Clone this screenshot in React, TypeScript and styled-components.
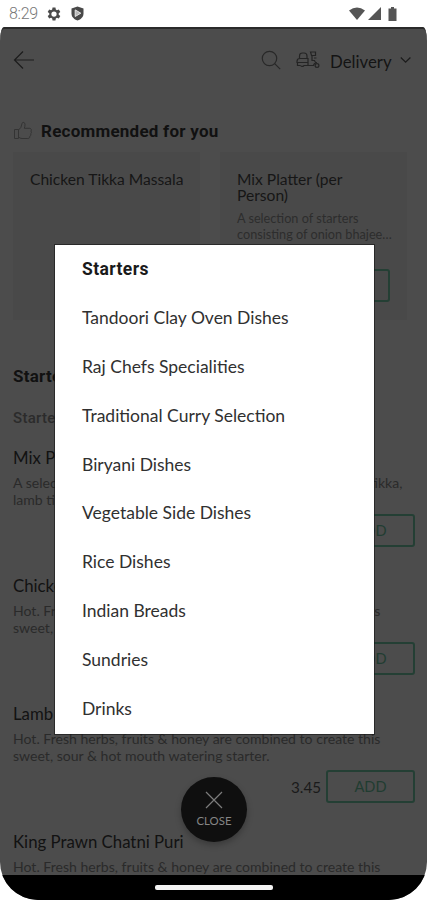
import React from 'react';
import styled, { createGlobalStyle } from 'styled-components';

const Global = createGlobalStyle`
  * { box-sizing: border-box; }
  body { margin: 0; background: #fff; font-family: Lato, sans-serif; }
  h2, h3, h4, p, ul { margin: 0; padding: 0; }
  button { font-family: inherit; padding: 0; }
`;

const Phone = styled.div`
  position: relative;
  width: 427px;
  height: 900px;
  overflow: hidden;
  background: #fff;
  display: flex;
  flex-direction: column;
`;

const StatusBar = styled.div`
  height: 27px;
  flex: none;
  display: flex;
  align-items: center;
  justify-content: space-between;
  padding: 0 29px 0 9px;
`;

const StatusGroup = styled.div<{ $gap: number }>`
  display: flex;
  align-items: center;
  gap: ${(p) => p.$gap}px;
`;

const Clock = styled.span`
  width: 28px;
  font: 300 16px/20px Roboto, sans-serif;
  letter-spacing: -0.3px;
  color: #777;
`;

const Screen = styled.div`
  flex: 1;
  min-height: 0;
  display: flex;
  flex-direction: column;
  overflow: hidden;
  background: #4c4c4c;
  border-top: 2px solid #2a2a2a;
  border-radius: 4px 4px 38px 38px / 14px 14px 38px 38px;
`;

const Header = styled.header`
  height: 62px;
  flex: none;
  display: flex;
  align-items: center;
  justify-content: space-between;
  padding: 0 15px 0 13px;
`;

const HeaderActions = styled.div`
  display: flex;
  align-items: center;
`;

const Mode = styled.span`
  width: 62px;
  margin: 3px 8px 0 10px;
  font-size: 16.8px;
  line-height: 22px;
  color: #141414;
`;

const Scooter = styled.svg`
  margin-left: 15px;
`;

const Content = styled.main`
  flex: 1;
  min-height: 0;
  overflow: hidden;
  padding: 27px 12px 0 13px;
`;

const SectionTitle = styled.h2`
  display: flex;
  align-items: center;
  gap: 7px;
  height: 26px;
  font: 700 17px/22px Roboto, sans-serif;
  letter-spacing: 0.24px;
  color: #111;
`;

const Cards = styled.div`
  display: flex;
  gap: 20px;
  margin-top: 8px;
`;

const Card = styled.article`
  width: 187px;
  height: 168px;
  background: #494949;
  padding: 20px 17px 0;
  display: flex;
  flex-direction: column;
`;

const CardTitle = styled.h3`
  font-size: 15.6px;
  line-height: 15.6px;
  font-weight: 400;
  color: #161616;
  white-space: pre;
`;

const CardText = styled.p`
  margin-top: 7px;
  font-size: 12.7px;
  line-height: 16px;
  color: #2d2d2d;
  white-space: pre;
`;

const CardFooter = styled.div<{ $gap: number }>`
  margin-top: auto;
  margin-bottom: 18px;
  display: flex;
  align-items: center;
  justify-content: flex-end;
  gap: ${(p) => p.$gap}px;
`;

const MenuHeading = styled.h2`
  margin-top: 45px;
  font: 700 17px/22px Roboto, sans-serif;
  letter-spacing: 0.24px;
  color: #111;
`;

const SubHeading = styled.h3`
  margin-top: 20px;
  font: 500 15px/22px Roboto, sans-serif;
  letter-spacing: 0.3px;
  color: #2b2b2b;
`;

const Dish = styled.article`
  height: 128px;
`;

const Dishes = styled.section`
  padding-top: 18px;
`;

const DishName = styled.h4`
  font-size: 16.8px;
  line-height: 22px;
  font-weight: 400;
  color: #121212;
`;

const DishText = styled.p`
  margin-top: 5px;
  height: 36px;
  font-size: 14.07px;
  line-height: 17.4px;
  color: #2a2a2a;
  white-space: pre;
`;

const DishFooter = styled.div`
  display: flex;
  align-items: center;
  justify-content: flex-end;
  gap: 5px;
  margin-top: 4px;
`;

const Price = styled.span`
  font-size: 15.2px;
  line-height: 20px;
  color: #1a1a1a;
`;

const AddButton = styled.button`
  width: 89px;
  height: 33px;
  border: 2px solid #243f34;
  border-radius: 3px;
  background: transparent;
  font-size: 14.6px;
  color: #213c31;
`;

const NavBar = styled.div`
  height: 25px;
  flex: none;
  background: #000;
  display: flex;
  justify-content: center;
  align-items: center;
`;

const NavHandle = styled.div`
  width: 118px;
  height: 5px;
  border-radius: 2px;
  background: #f4f4f4;
`;

const Modal = styled.div`
  position: absolute;
  left: 55px;
  top: 245px;
  width: 319px;
  height: 489px;
  background: #fff;
  box-shadow: 0 0 0 1px rgba(20, 20, 20, 0.6);
`;

const MenuList = styled.ul`
  list-style: none;
`;

const MenuItem = styled.li<{ $active?: boolean }>`
  height: 48.8px;
  display: flex;
  align-items: center;
  padding-left: 27px;
  padding-bottom: ${(p) => (p.$active ? 0 : 1)}px;
  font-family: ${(p) => (p.$active ? 'Roboto' : 'Lato')}, sans-serif;
  font-size: 17.5px;
  letter-spacing: ${(p) => (p.$active ? '0.4px' : 'normal')};
  font-weight: ${(p) => (p.$active ? 700 : 400)};
  color: ${(p) => (p.$active ? '#1a1a1a' : '#303030')};
`;

const CloseButton = styled.button`
  position: absolute;
  left: 181px;
  top: 777px;
  width: 66px;
  height: 65px;
  border: 0;
  border-radius: 50%;
  background: #0f0f0f;
  box-shadow: 0 3px 6px rgba(0, 0, 0, 0.25);
  display: flex;
  flex-direction: column;
  align-items: center;
  padding-top: 14px;
  gap: 5px;
  font-size: 11.4px;
  line-height: 14px;
  color: #858585;
`;

const LINES = 'Hot. Fresh herbs, fruits & honey are combined to create this\nsweet, sour & hot mouth watering starter.';

const dishes = [
  { name: 'Mix Platter (per Person)', text: 'A selection of starters consisting of onion bhajee, chicken tikka,\nlamb tikka and sheek kebab.', price: '4.95' },
  { name: 'Chicken Chatni Puri', text: LINES, price: '3.45' },
  { name: 'Lamb Chatni Puri', text: LINES, price: '3.45' },
  { name: 'King Prawn Chatni Puri', text: LINES, price: '4.45' },
];

const categories = [
  'Starters',
  'Tandoori Clay Oven Dishes',
  'Raj Chefs Specialities',
  'Traditional Curry Selection',
  'Biryani Dishes',
  'Vegetable Side Dishes',
  'Rice Dishes',
  'Indian Breads',
  'Sundries',
  'Drinks',
];

const Gear = () => (
  <svg width="14" height="14" viewBox="0 0 24 24" fill="#4a4a4a">
    <path fillRule="evenodd" d="M9.5 1h5l.6 3.4 1.9 1.1 3.3-1.2 2.5 4.3-2.7 2.3v2.2l2.7 2.3-2.5 4.3-3.3-1.2-1.9 1.1-.6 3.4h-5l-.6-3.4L7 18.500l-3.300 1.200-2.500-4.300 2.700-2.300v-2.200L1.200 8.600l2.500-4.300L7 5.500l1.900-1.100zM12 7.500a4.500 4.500 0 1 0 0 9 4.500 4.500 0 0 0 0-9z" />
  </svg>
);

const Shield = () => (
  <svg width="13" height="15" viewBox="0 0 13 15">
    <path d="M6.500 .5 12.500 2.500v5c0 3.500-2.500 5.800-6 7-3.500-1.200-6-3.500-6-7v-5z" fill="#494949" />
    <path d="M4.200 3.900 9.800 7.200 4.200 10.500z" fill="#b9b9b9" stroke="#e4e4e4" strokeWidth="1" />
  </svg>
);

export default function App() {
  return (
    <>
      <Global />
      <Phone>
        <StatusBar>
          <StatusGroup $gap={10}>
            <Clock>8:29</Clock>
            <Gear />
            <Shield />
          </StatusGroup>
          <StatusGroup $gap={3}>
            <svg width="16" height="13" viewBox="0 0 16 13"><path d="M0 3.500Q8-2.500 16 3.500L8 13z" fill="#555" /></svg>
            <svg width="13" height="13" viewBox="0 0 13 13"><path d="M13 0v13H0z" fill="#555" /></svg>
            <svg width="14" height="14" viewBox="0 0 14 14"><path d="M5 1.500h2V0h3v1.500h2.500V14H4.500V1.500z" fill="#555" /></svg>
          </StatusGroup>
        </StatusBar>
        <Screen>
          <Header>
            <svg width="22" height="20" viewBox="0 0 22 20" fill="none" stroke="#1c1c1c" strokeWidth="1.200">
              <path d="M10 1.500 1.500 10l8.500 8.500M1.500 10H21" />
            </svg>
            <HeaderActions>
              <svg width="20" height="20" viewBox="0 0 20 20" fill="none" stroke="#282828" strokeWidth="1.200">
                <circle cx="8.500" cy="8.500" r="7.200" />
                <path d="m13.700 13.700 5.500 5.500" />
              </svg>
              <Scooter width="24" height="20" viewBox="0 0 24 20" fill="none" stroke="#242424" strokeWidth="1.200">
                <path d="M3.500 8V6q0-3 3-3h1.500q3 0 3 3v2M1 11.500q0-3 3-3h8v4H1zM1.500 12.500v3h3M8 15.500h6M12 8.500v7" />
                <path d="M4.500 15.500q1.500 2 3.500 0" />
                <path d="M14.500 2h5v3.500h-4zM16 5.500v5h2.500l1.500 3M14 15.500h3.500q.5-3 3.500-3M18 8h2.500" />
                <circle cx="21" cy="15.500" r="1.900" />
              </Scooter>
              <Mode>Delivery</Mode>
              <svg width="12" height="8" viewBox="0 0 12 8" fill="none" stroke="#1c1c1c" strokeWidth="1.300"><path d="m.8 1.500 4.800 4.700 4.800-4.700" /></svg>
            </HeaderActions>
          </Header>
          <Content>
            <SectionTitle>
              <svg width="21" height="20" viewBox="0 0 21 20" fill="none" stroke="#343434" strokeWidth="1">
                <path d="M1.500 8.500h4v9h-4zM5.500 9q3-2 3.500-6.500c.2-1.600 3-1.500 3 .8 0 1.500-.3 2.600-.7 4h5c2.200 0 2.500 1.800 1.500 2.800 1 .7.8 2.200-.2 2.700.6 1 .1 2-.8 2.400.3 1.200-.4 2.300-2 2.300H9q-2 0-3.500-1.500" />
              </svg>
              Recommended for you
            </SectionTitle>
            <Cards>
              <Card>
                <CardTitle>Chicken Tikka Massala</CardTitle>
                <CardFooter $gap={9}><Price>9.95</Price><AddButton>ADD</AddButton></CardFooter>
              </Card>
              <Card>
                <CardTitle>{'Mix Platter (per\nPerson)'}</CardTitle>
                <CardText>{'A selection of starters\nconsisting of onion bhajee…'}</CardText>
                <CardFooter $gap={5}><Price>4.95</Price><AddButton>ADD</AddButton></CardFooter>
              </Card>
            </Cards>
            <MenuHeading>Starters</MenuHeading>
            <SubHeading>Starters</SubHeading>
            <Dishes>
              {dishes.map((d) => (
                <Dish key={d.name}>
                  <DishName>{d.name}</DishName>
                  <DishText>{d.text}</DishText>
                  <DishFooter><Price>{d.price}</Price><AddButton>ADD</AddButton></DishFooter>
                </Dish>
              ))}
            </Dishes>
          </Content>
          <NavBar><NavHandle /></NavBar>
        </Screen>
        <Modal>
          <MenuList>
            {categories.map((c, i) => <MenuItem key={c} $active={i === 0}>{c}</MenuItem>)}
          </MenuList>
        </Modal>
        <CloseButton>
          <svg width="18" height="18" viewBox="0 0 18 18" stroke="#7c7c7c" strokeWidth="1.200"><path d="m1 1 16 16M17 1 1 17" /></svg>
          CLOSE
        </CloseButton>
      </Phone>
    </>
  );
}
